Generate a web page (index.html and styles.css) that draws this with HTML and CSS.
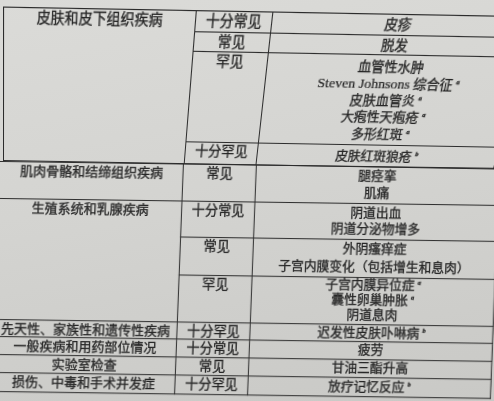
FILE: index.html
```html
<!DOCTYPE html>
<html lang="zh-CN">
<head>
<meta charset="utf-8">
<title>不良反应表</title>
<link rel="stylesheet" href="styles.css">
</head>
<body>
<div class="page">
  <div class="sheet upper">
    <table class="ae">
      <colgroup><col class="u-soc"><col class="u-freq"><col class="u-term"></colgroup>
      <tbody>
        <tr class="r1"><td class="soc" rowspan="4">皮肤和皮下组织疾病</td><td class="freq">十分常见</td><td class="term">皮疹</td></tr>
        <tr class="r2"><td class="freq">常见</td><td class="term">脱发</td></tr>
        <tr class="r3"><td class="freq">罕见</td><td class="term lh-a">血管性水肿<br><span class="lat">Steven Johnsons</span> 综合征<sup>a</sup><br>皮肤血管炎<sup>a</sup><br>大疱性天疱疮<sup>a</sup><br>多形红斑<sup>a</sup></td></tr>
        <tr class="r4"><td class="freq">十分罕见</td><td class="term">皮肤红斑狼疮<sup>b</sup></td></tr>
      </tbody>
    </table>
  </div>
  <div class="sheet lower">
    <table class="ae">
      <colgroup><col class="l-soc"><col class="l-freq"><col class="l-term"></colgroup>
      <tbody>
        <tr class="r5"><td class="soc">肌肉骨骼和结缔组织疾病</td><td class="freq">常见</td><td class="term lh-b">腿痉挛<br>肌痛</td></tr>
        <tr class="r6"><td class="soc" rowspan="3">生殖系统和乳腺疾病</td><td class="freq">十分常见</td><td class="term lh-c">阴道出血<br>阴道分泌物增多</td></tr>
        <tr class="r7"><td class="freq">常见</td><td class="term lh-d">外阴瘙痒症<br>子宫内膜变化（包括增生和息肉）</td></tr>
        <tr class="r8"><td class="freq">罕见</td><td class="term lh-e">子宫内膜异位症<sup>a</sup><br>囊性卵巢肿胀<sup>a</sup><br>阴道息肉</td></tr>
        <tr class="r9"><td class="soc">先天性、家族性和遗传性疾病</td><td class="freq">十分罕见</td><td class="term">迟发性皮肤卟啉病<sup>b</sup></td></tr>
        <tr class="r10"><td class="soc">一般疾病和用药部位情况</td><td class="freq">十分常见</td><td class="term">疲劳</td></tr>
        <tr class="r11"><td class="soc">实验室检查</td><td class="freq">常见</td><td class="term">甘油三酯升高</td></tr>
        <tr class="r12"><td class="soc">损伤、中毒和手术并发症</td><td class="freq">十分罕见</td><td class="term">放疗记忆反应<sup>b</sup></td></tr>
      </tbody>
    </table>
  </div>
</div>
</body>
</html>
```
FILE: styles.css
```css
html, body {
  margin: 0;
  padding: 0;
}
body {
  background: #d3d3d0;
  font-family: "Liberation Serif", "Noto Sans CJK SC", serif;
  color: #262626;
}
.page {
  width: 494px;
  height: 401px;
  overflow: hidden;
  background: linear-gradient(170deg, #dbdbd8 0%, #d4d4d1 45%, #c9c9c6 100%);
}
.upper {
  margin-left: 3px;
  margin-top: 14px;
  width: 492px;
  height: 146px;
  transform-origin: 0 100%;
  transform: perspective(400px) rotateX(-9.9deg) skewY(1deg);
}
.lower {
  margin-left: -2px;
  margin-top: 1px;
  width: 501px;
  height: 232px;
  transform-origin: 5px 0;
  transform: skewX(-2.2deg) skewY(0.8deg);
}
.ae {
  width: 100%;
  table-layout: fixed;
  border-collapse: collapse;
  font-size: 13.2px;
  -webkit-text-stroke: 0.3px #262626;
}
.u-soc { width: 181px; }
.u-freq { width: 72px; }
.u-term { width: 239px; }
.l-soc { width: 185px; }
.l-freq { width: 73px; }
.l-term { width: 243px; }
.ae td {
  border: 1.6px solid #2c2c2c;
  padding: 0 2px;
  text-align: center;
  line-height: 14px;
  white-space: nowrap;
}
.ae td.soc, .ae td.freq {
  vertical-align: top;
  padding-top: 2px;
}
.lower .ae td.soc {
  font-size: 13px;
  padding-left: 4px;
}
.term {
  vertical-align: middle;
  font-size: 12.75px;
}
.ae td.lh-a { line-height: 16.3px; }
.ae td.lh-b { line-height: 17px; }
.ae td.lh-c { line-height: 16.5px; }
.ae td.lh-d { line-height: 18.5px; }
.ae td.lh-e { line-height: 15px; }
.lat {
  font-family: "Liberation Serif", serif;
  font-size: 13.5px;
  -webkit-text-stroke: 0.2px #262626;
}
sup {
  font-family: "Liberation Serif", serif;
  font-style: italic;
  font-weight: 700;
  font-size: 6.5px;
  line-height: 0;
  vertical-align: 5px;
  margin-left: 3px;
}
.r1 { height: 18.9px; }
.r2 { height: 18.3px; }
.r3 { height: 87.3px; }
.r4 { height: 21.5px; }
.r5 { height: 37px; }
.r6 { height: 35.5px; }
.r7 { height: 37px; }
.r8 { height: 47px; }
.r9 { height: 17px; }
.r10 { height: 18px; }
.r11 { height: 18px; }
.r12 { height: 19.5px; }
```
